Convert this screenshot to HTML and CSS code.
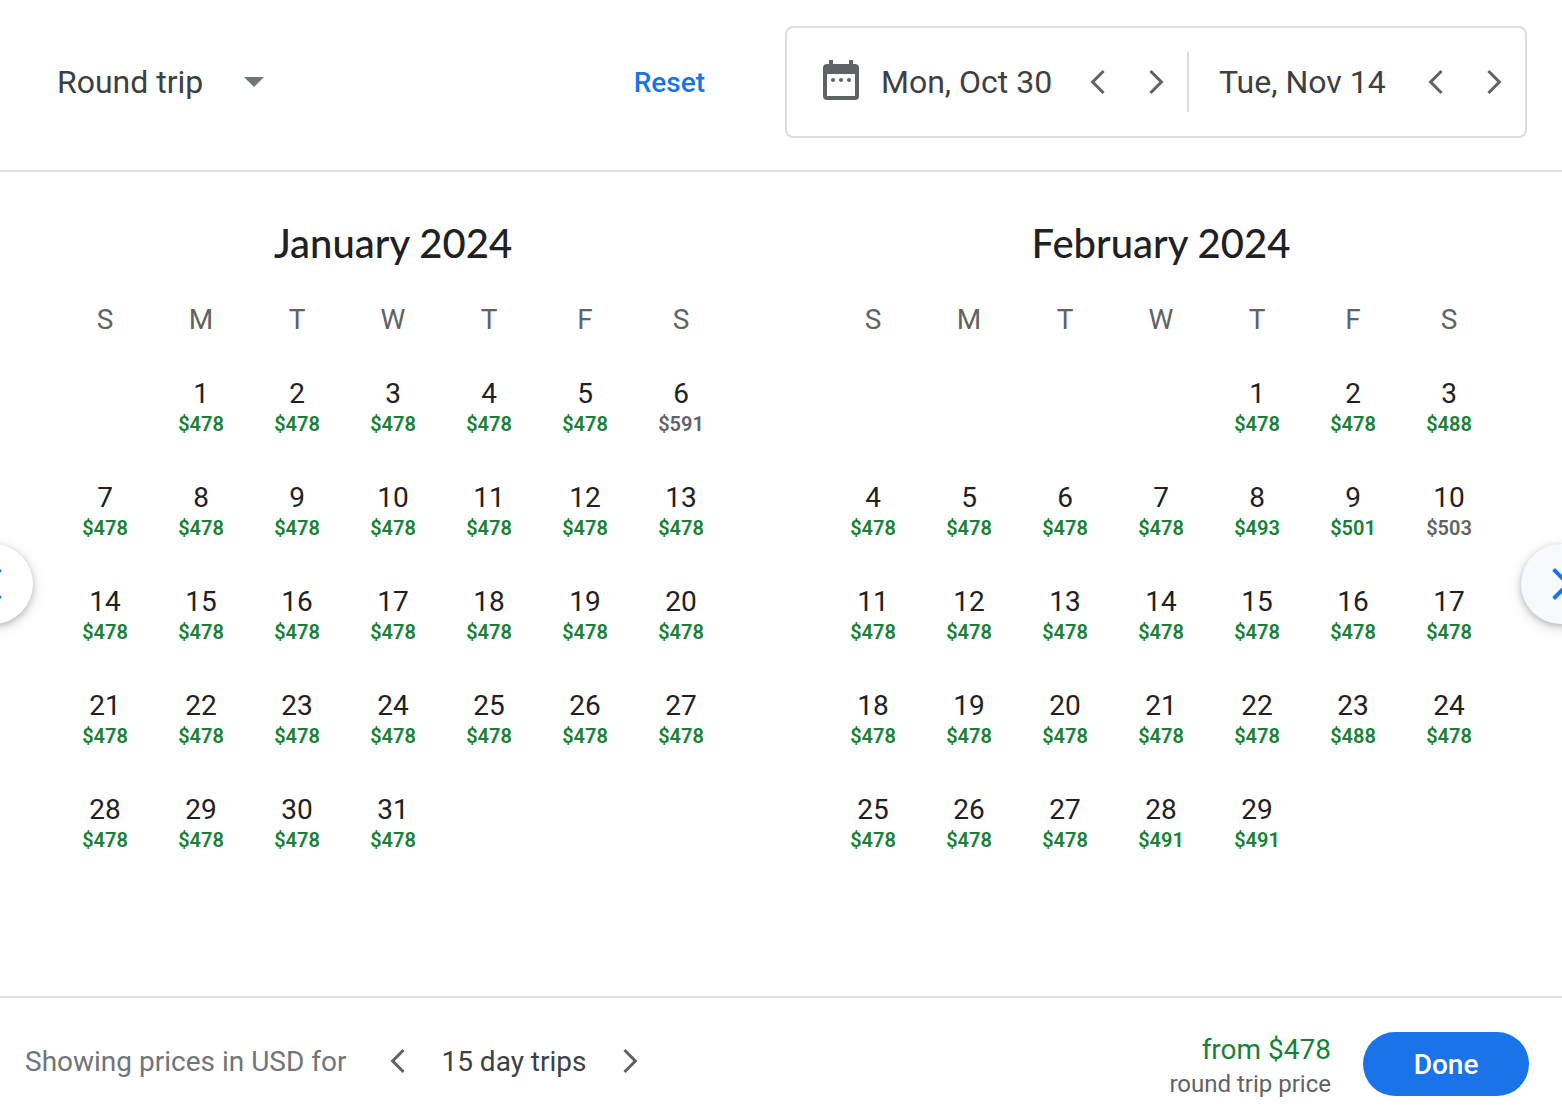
FILE: index.html
```html
<!DOCTYPE html>
<html lang="en">
<head>
  <meta charset="UTF-8">
  <title>Choose dates</title>
  <meta name="viewport" content="width=device-width, initial-scale=1">
  <link rel="stylesheet" href="styles.css">
</head>
<body>
  <svg class="symbols" aria-hidden="true">
    <symbol id="chevron-left" viewBox="0 0 24 24"><path d="M16.41 5.41L15 4l-8 8 8 8 1.41-1.41L9.83 12z"/></symbol>
    <symbol id="chevron-right" viewBox="0 0 24 24"><path d="M7.59 18.59L9 20l8-8-8-8-1.41 1.41L14.17 12z"/></symbol>
  </svg>

  <header class="toolbar">
    <div class="trip-type">
      <select class="trip-select" aria-label="Trip type">
        <option>Round trip</option>
        <option>One way</option>
      </select>
      <svg class="caret" viewBox="0 0 20 10" aria-hidden="true"><path d="M0 0h20L10 10z"/></svg>
    </div>
    <button class="reset-btn" type="button">Reset</button>
    <div class="date-box">
      <div class="date-field depart">
        <svg class="calendar-icon" viewBox="0 0 36 40" aria-hidden="true">
          <path fill-rule="evenodd" d="M6 0h4v4h16V0h4v4h2a4 4 0 0 1 4 4v28a4 4 0 0 1-4 4H4a4 4 0 0 1-4-4V8a4 4 0 0 1 4-4h2zM4 14v22h28V14z"/>
          <circle cx="10" cy="20" r="2"/><circle cx="18" cy="20" r="2"/><circle cx="26" cy="20" r="2"/>
        </svg>
        <input class="date-input" type="text" value="Mon, Oct 30" aria-label="Departure date">
        <button class="step-btn" type="button" aria-label="Earlier departure"><svg><use href="#chevron-left"/></svg></button>
        <button class="step-btn" type="button" aria-label="Later departure"><svg><use href="#chevron-right"/></svg></button>
      </div>
      <div class="divider"></div>
      <div class="date-field return">
        <input class="date-input" type="text" value="Tue, Nov 14" aria-label="Return date">
        <button class="step-btn" type="button" aria-label="Earlier return"><svg><use href="#chevron-left"/></svg></button>
        <button class="step-btn" type="button" aria-label="Later return"><svg><use href="#chevron-right"/></svg></button>
      </div>
    </div>
  </header>

  <main class="calendar">
    <section class="month">
      <h2>January 2024</h2>
      <table>
        <thead><tr><th>S</th><th>M</th><th>T</th><th>W</th><th>T</th><th>F</th><th>S</th></tr></thead>
        <tbody id="january"></tbody>
      </table>
    </section>
    <section class="month">
      <h2>February 2024</h2>
      <table>
        <thead><tr><th>S</th><th>M</th><th>T</th><th>W</th><th>T</th><th>F</th><th>S</th></tr></thead>
        <tbody id="february"></tbody>
      </table>
    </section>
    <button class="page-btn prev" type="button" aria-label="Previous month"><svg><use href="#chevron-left"/></svg></button>
    <button class="page-btn next" type="button" aria-label="Next month"><svg><use href="#chevron-right"/></svg></button>
  </main>

  <footer class="footer">
    <div class="trip-length">
      <span class="currency-note">Showing prices in USD for</span>
      <button class="step-btn" type="button" aria-label="Shorter trip"><svg><use href="#chevron-left"/></svg></button>
      <span>15 day trips</span>
      <button class="step-btn" type="button" aria-label="Longer trip"><svg><use href="#chevron-right"/></svg></button>
    </div>
    <div class="total">
      <div class="total-price">from $478</div>
      <div class="total-label">round trip price</div>
    </div>
    <button class="done-btn" type="button">Done</button>
  </footer>
  <script src="script.js"></script>
</body>
</html>
```
FILE: styles.css
```css
* {
  box-sizing: border-box;
}
body {
  margin: 0;
  min-height: 100vh;
  display: flex;
  flex-direction: column;
  background: #fff;
  color: #202124;
  font-family: Roboto, Arial, sans-serif;
  font-size: 28px;
}
button, input, select {
  font: inherit;
  color: inherit;
  background: none;
  border: none;
  padding: 0;
  margin: 0;
}
button {
  cursor: pointer;
}
svg {
  fill: currentColor;
}
.symbols {
  display: none;
}

/* top bar */
.toolbar {
  display: flex;
  align-items: center;
  padding: 26px 35px 32px 57px;
  border-bottom: 2px solid #dadce0;
}
.trip-type {
  position: relative;
  color: #3c4043;
  font-size: 32px;
}
.trip-select {
  appearance: none;
  width: 216px;
  height: 64px;
  cursor: pointer;
}
.caret {
  position: absolute;
  right: 9px;
  top: 27px;
  width: 20px;
  height: 10px;
  color: #70757a;
  pointer-events: none;
}
.reset-btn {
  margin-left: auto;
  padding: 16px;
  color: #1a73e8;
  font-weight: 500;
}
.date-box {
  display: flex;
  align-items: center;
  height: 112px;
  margin-left: 64px;
  border: 2px solid #dadce0;
  border-radius: 8px;
}
.date-field {
  display: flex;
  align-items: center;
  padding-right: 2px;
  color: #3c4043;
  font-size: 32px;
}
.depart {
  padding-left: 36px;
}
.return {
  padding-left: 30px;
}
.calendar-icon {
  flex: none;
  width: 36px;
  height: 40px;
  margin: 0 22px 4px 0;
  color: #5f6368;
}
.date-input {
  width: 188px;
}
.divider {
  width: 2px;
  height: 60px;
  background: #dadce0;
}
.step-btn {
  flex: none;
  display: flex;
  align-items: center;
  justify-content: center;
  width: 58px;
  height: 58px;
  color: #5f6368;
}
.step-btn svg {
  width: 36px;
  height: 36px;
}

/* months */
.calendar {
  position: relative;
  flex: 1;
  display: flex;
  gap: 96px;
  padding: 44px 65px 0 57px;
  overflow: hidden;
}
.month {
  flex: 1;
}
.month h2 {
  margin: 0;
  text-align: center;
  font-family: "Google Sans", Lato, sans-serif;
  font-size: 40px;
  font-weight: 500;
  line-height: 54px;
}
.month table {
  width: 100%;
  table-layout: fixed;
  border-collapse: collapse;
}
.month th {
  height: 86px;
  padding: 12px 0 0;
  color: #5f6368;
  font-weight: 400;
}
.month td {
  height: 104px;
  padding: 0;
}
.day {
  display: flex;
  flex-direction: column;
  align-items: center;
  justify-content: center;
  width: 100%;
  height: 104px;
}
.day-number {
  line-height: 32px;
}
.day-price {
  color: #5f6368;
  font-size: 20px;
  font-weight: 600;
  line-height: 28px;
}
.day-price.low {
  color: #188038;
}
.page-btn {
  position: absolute;
  top: 372px;
  display: flex;
  align-items: center;
  justify-content: center;
  width: 80px;
  height: 80px;
  border-radius: 50%;
  background: #fff;
  color: #1a73e8;
  box-shadow: 0 2px 6px rgba(60,64,67,0.3), 0 4px 14px rgba(60,64,67,0.15);
}
.page-btn svg {
  flex: none;
  width: 48px;
  height: 48px;
}
.prev {
  left: -47px;
}
.next {
  right: -39px;
  background: #f8f9fa;
}

/* bottom bar */
.footer {
  display: flex;
  align-items: flex-start;
  height: 120px;
  padding: 34px 33px 0 25px;
  border-top: 2px solid #dadce0;
}
.trip-length {
  display: flex;
  align-items: center;
  gap: 14px;
  color: #3c4043;
}
.currency-note {
  margin-right: 9px;
  color: #70757a;
}
.total {
  margin-left: auto;
  text-align: right;
}
.total-price {
  color: #188038;
  line-height: 36px;
}
.total-label {
  color: #5f6368;
  font-size: 24px;
  line-height: 32px;
}
.done-btn {
  width: 166px;
  height: 64px;
  margin-left: 32px;
  border-radius: 32px;
  background: #1a73e8;
  color: #fff;
  font-weight: 500;
}
```
FILE: script.js
```js
const months = [
  { id: 'january', start: 1, days: 31, prices: { 6: 591 }, high: [6] },
  { id: 'february', start: 4, days: 29, prices: { 3: 488, 8: 493, 9: 501, 10: 503, 23: 488, 28: 491, 29: 491 }, high: [10] }
];

months.forEach(function(month) {
  const cells = [];
  for (let i = 0; i < month.start; i++) {
    cells.push('<td></td>');
  }
  for (let day = 1; day <= month.days; day++) {
    const price = month.prices[day] || 478;
    const low = month.high.includes(day) ? '' : ' low';
    cells.push(`<td><button class="day" type="button">` +
               `<span class="day-number">${day}</span>` +
               `<span class="day-price${low}">$${price}</span>` +
               `</button></td>`);
  }
  let html = '';
  for (let i = 0; i < cells.length; i += 7) {
    html += '<tr>' + cells.slice(i, i + 7).join('') + '</tr>';
  }
  document.getElementById(month.id).innerHTML = html;
});
```
